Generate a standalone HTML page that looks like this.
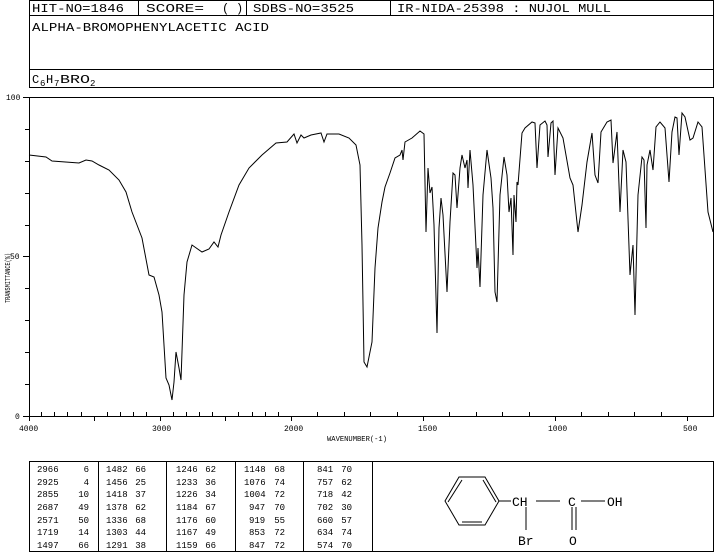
<!DOCTYPE html>
<html><head><meta charset="utf-8"><style>
html,body{margin:0;padding:0;background:#fff;}
svg{display:block;}
text{font-family:"Liberation Mono",monospace;fill:#000;}
</style></head><body>
<svg width="715" height="553" viewBox="0 0 715 553" xmlns="http://www.w3.org/2000/svg">
<g fill="none" stroke="#000" stroke-width="1">
<rect x="29.5" y="0.5" width="684" height="87"/>
<line x1="29" y1="15.5" x2="714" y2="15.5"/>
<line x1="29" y1="69.5" x2="714" y2="69.5"/>
<line x1="138.5" y1="0" x2="138.5" y2="15"/>
<line x1="246.5" y1="0" x2="246.5" y2="15"/>
<line x1="390.5" y1="0" x2="390.5" y2="15"/>
<rect x="29.5" y="97.5" width="684" height="319"/>
</g>
<g font-size="12">
<text x="32" y="12" textLength="92" lengthAdjust="spacingAndGlyphs">HIT-NO=1846</text>
<text x="146" y="12" textLength="58" lengthAdjust="spacingAndGlyphs">SCORE=</text>
<text x="222" y="12">(</text><text x="236" y="12">)</text>
<text x="253" y="12" textLength="101" lengthAdjust="spacingAndGlyphs">SDBS-NO=3525</text>
<text x="397" y="12" textLength="214" lengthAdjust="spacingAndGlyphs">IR-NIDA-25398 : NUJOL MULL</text>
<text x="32" y="31" textLength="237" lengthAdjust="spacingAndGlyphs">ALPHA-BROMOPHENYLACETIC ACID</text>
<text x="32" y="83">C</text><text x="40" y="86" font-size="9">6</text>
<text x="46" y="83">H</text><text x="54" y="86" font-size="9">7</text>
<text x="60" y="83" textLength="30" lengthAdjust="spacingAndGlyphs">BRO</text><text x="90" y="86" font-size="9">2</text>
</g>
<g stroke="#000" stroke-width="1">
<line x1="23" y1="97.5" x2="29" y2="97.5"/>
<line x1="25" y1="129.5" x2="29" y2="129.5"/>
<line x1="25" y1="161.5" x2="29" y2="161.5"/>
<line x1="25" y1="193.5" x2="29" y2="193.5"/>
<line x1="25" y1="225.5" x2="29" y2="225.5"/>
<line x1="23" y1="256.5" x2="29" y2="256.5"/>
<line x1="25" y1="288.5" x2="29" y2="288.5"/>
<line x1="25" y1="320.5" x2="29" y2="320.5"/>
<line x1="25" y1="352.5" x2="29" y2="352.5"/>
<line x1="25" y1="384.5" x2="29" y2="384.5"/>
<line x1="23" y1="416.5" x2="29" y2="416.5"/>
</g>
<path fill="none" stroke="#000" stroke-width="1" d="M41.5 412V416M54.5 412V416M67.5 412V416M81.5 412V416M107.5 412V416M120.5 412V416M133.5 412V416M146.5 412V416M173.5 412V416M186.5 412V416M199.5 412V416M212.5 412V416M238.5 412V416M252.5 412V416M265.5 412V416M278.5 412V416M317.5 412V416M344.5 412V416M370.5 412V416M397.5 412V416M449.5 412V416M476.5 412V416M502.5 412V416M529.5 412V416M581.5 412V416M608.5 412V416M634.5 412V416M661.5 412V416M94.5 416V421M160.5 416V421M225.5 416V421M291.5 416V421M423.5 416V421M555.5 416V421M687.5 416V421M29.5 416V421"/>
<g font-size="8">
<text x="6" y="100">100</text>
<text x="10" y="259">50</text>
<text x="15" y="419">0</text>
<text transform="translate(10,303) rotate(-90)" textLength="50" lengthAdjust="spacingAndGlyphs" font-size="7">TRANSMITTANCE(%)</text>
<text x="19" y="431">4000</text>
<text x="152" y="431">3000</text>
<text x="284" y="431">2000</text>
<text x="418" y="431">1500</text>
<text x="548" y="431">1000</text>
<text x="683" y="431">500</text>
<text x="327" y="441" font-size="7" textLength="60" lengthAdjust="spacingAndGlyphs">WAVENUMBER(-1)</text>
</g>
<polyline fill="none" stroke="#000" stroke-width="1" points="29,155 46,157 52,161 79,163 86,160 92,161 99,165 109,170 119,180 126,192 132,212 142,238 149,275 154,277 159,295 162,312 166,378 169,385 172,400 174,382 176,352 179,368 181,380 182,352 184,295 187,262 192,245 202,252 209,249 214,242 218,247 221,235 229,212 239,185 249,168 262,155 276,143 287,142 294,134 297,143 301,135 304,138 311,135 321,133 324,142 327,134 339,134 349,138 356,145 360,165 362,245 364,362 367,367 372,342 375,268 378,228 382,202 385,187 390,173 395,158 400,155 402,150 403,160 405,142 412,138 420,131 424,134 426,232 428,168 430,193 432,187 434,225 437,333 439,228 441,198 443,215 447,292 450,222 453,173 455,175 457,208 460,168 462,155 465,168 467,160 468,188 470,150 473,185 477,268 478,248 480,287 483,195 487,150 491,178 493,208 495,292 497,302 500,195 504,157 507,175 509,212 511,198 513,255 514,195 516,222 517,182 518,185 522,133 525,128 532,122 535,123 537,168 540,125 545,121 547,125 548,157 551,123 553,121 555,175 558,128 563,138 570,178 573,185 578,232 582,205 587,162 592,133 595,175 598,183 601,132 607,122 611,120 613,163 617,132 618,158 620,212 623,150 626,162 630,275 633,245 635,315 638,195 642,157 644,160 646,228 647,165 650,150 653,170 656,127 660,122 665,128 669,182 672,132 675,117 677,118 679,155 682,113 685,117 690,140 693,138 698,122 702,127 708,212 713,232"/>
<g fill="none" stroke="#000" stroke-width="1">
<rect x="29.5" y="461.5" width="684" height="90"/>
<line x1="98.5" y1="461" x2="98.5" y2="552"/>
<line x1="166.5" y1="461" x2="166.5" y2="552"/>
<line x1="235.5" y1="461" x2="235.5" y2="552"/>
<line x1="303.5" y1="461" x2="303.5" y2="552"/>
<line x1="372.5" y1="461" x2="372.5" y2="552"/>
</g>
<g font-size="9">
<text x="37" y="472">2966</text><text x="89" y="472" text-anchor="end">6</text>
<text x="37" y="485">2925</text><text x="89" y="485" text-anchor="end">4</text>
<text x="37" y="497">2855</text><text x="89" y="497" text-anchor="end">10</text>
<text x="37" y="510">2687</text><text x="89" y="510" text-anchor="end">49</text>
<text x="37" y="523">2571</text><text x="89" y="523" text-anchor="end">50</text>
<text x="37" y="535">1719</text><text x="89" y="535" text-anchor="end">14</text>
<text x="37" y="548">1497</text><text x="89" y="548" text-anchor="end">66</text>
<text x="106" y="472">1482</text><text x="146" y="472" text-anchor="end">66</text>
<text x="106" y="485">1456</text><text x="146" y="485" text-anchor="end">25</text>
<text x="106" y="497">1418</text><text x="146" y="497" text-anchor="end">37</text>
<text x="106" y="510">1378</text><text x="146" y="510" text-anchor="end">62</text>
<text x="106" y="523">1336</text><text x="146" y="523" text-anchor="end">68</text>
<text x="106" y="535">1303</text><text x="146" y="535" text-anchor="end">44</text>
<text x="106" y="548">1291</text><text x="146" y="548" text-anchor="end">38</text>
<text x="176" y="472">1246</text><text x="216" y="472" text-anchor="end">62</text>
<text x="176" y="485">1233</text><text x="216" y="485" text-anchor="end">36</text>
<text x="176" y="497">1226</text><text x="216" y="497" text-anchor="end">34</text>
<text x="176" y="510">1184</text><text x="216" y="510" text-anchor="end">67</text>
<text x="176" y="523">1176</text><text x="216" y="523" text-anchor="end">60</text>
<text x="176" y="535">1167</text><text x="216" y="535" text-anchor="end">49</text>
<text x="176" y="548">1159</text><text x="216" y="548" text-anchor="end">66</text>
<text x="244" y="472">1148</text><text x="285" y="472" text-anchor="end">68</text>
<text x="244" y="485">1076</text><text x="285" y="485" text-anchor="end">74</text>
<text x="244" y="497">1004</text><text x="285" y="497" text-anchor="end">72</text>
<text x="249" y="510">947</text><text x="285" y="510" text-anchor="end">70</text>
<text x="249" y="523">919</text><text x="285" y="523" text-anchor="end">55</text>
<text x="249" y="535">853</text><text x="285" y="535" text-anchor="end">72</text>
<text x="249" y="548">847</text><text x="285" y="548" text-anchor="end">72</text>
<text x="317" y="472">841</text><text x="352" y="472" text-anchor="end">70</text>
<text x="317" y="485">757</text><text x="352" y="485" text-anchor="end">62</text>
<text x="317" y="497">718</text><text x="352" y="497" text-anchor="end">42</text>
<text x="317" y="510">702</text><text x="352" y="510" text-anchor="end">30</text>
<text x="317" y="523">660</text><text x="352" y="523" text-anchor="end">57</text>
<text x="317" y="535">634</text><text x="352" y="535" text-anchor="end">74</text>
<text x="317" y="548">574</text><text x="352" y="548" text-anchor="end">70</text>
</g>
<g fill="none" stroke="#000" stroke-width="1">
<polygon points="459,477 485,477 499,501 485,525 459,525 445,501"/>
<line x1="462" y1="480" x2="448" y2="502"/>
<line x1="483" y1="480" x2="496" y2="502"/>
<line x1="462" y1="522" x2="482" y2="522"/>
<line x1="499" y1="501" x2="511" y2="501"/>
<line x1="536" y1="501" x2="560" y2="501"/>
<line x1="581" y1="501" x2="605" y2="501"/>
<line x1="526" y1="507" x2="526" y2="530"/>
<line x1="572" y1="507" x2="572" y2="530"/>
<line x1="576" y1="507" x2="576" y2="530"/>
</g>
<g font-size="13">
<text x="512" y="506">CH</text>
<text x="568" y="506">C</text>
<text x="607" y="506">OH</text>
<text x="518" y="545">Br</text>
<text x="569" y="545">O</text>
</g>
</svg>
</body></html>
